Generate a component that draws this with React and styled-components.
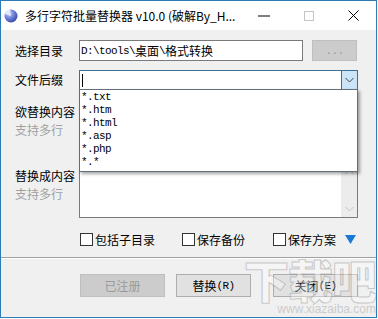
import React from "react";
import styled, { createGlobalStyle } from "styled-components";

const UI = `"Noto Sans CJK SC", "Noto Sans", sans-serif`;
const MONO = `"Liberation Mono", "DejaVu Sans Mono", monospace`;

const GlobalStyle = createGlobalStyle`
  html, body {
    margin: 0;
    padding: 0;
    background: #fff;
  }
  body {
    font-family: ${UI};
    font-size: 12px;
    color: #000;
  }
`;

const Window = styled.div`
  position: relative;
  width: 377px;
  height: 318px;
  box-sizing: border-box;
  border: 1px solid #2c7bb6;
  background: #f0f0f0;
  display: flex;
  flex-direction: column;
  overflow: hidden;
`;

const TitleBar = styled.div`
  height: 29px;
  flex-shrink: 0;
  background: #fff;
  display: flex;
  align-items: center;
`;

const AppIcon = styled.svg`
  width: 14px;
  height: 14px;
  margin-left: 3px;
  flex-shrink: 0;
`;

const Title = styled.div`
  margin-left: 7px;
  font-size: 12px;
  line-height: 16px;
  white-space: nowrap;
`;

const Controls = styled.div`
  margin-left: auto;
  display: flex;
  height: 29px;
`;

const CtrlBtn = styled.div`
  width: 45px;
  height: 29px;
  display: flex;
  align-items: center;
  justify-content: center;
`;

const Body = styled.div`
  padding: 10px 0 0 14px;
  display: flex;
  flex-direction: column;
`;

const Row = styled.div`
  display: flex;
  align-items: ${(p) => (p.$top ? "flex-start" : "center")};
  margin-top: ${(p) => p.$gap || 0}px;
`;

const Label = styled.div`
  width: 64px;
  flex-shrink: 0;
  font-size: 12px;
  line-height: 18px;
`;

const LabelStack = styled.div`
  width: 64px;
  flex-shrink: 0;
  padding-top: 4px;
  line-height: 18px;
  font-size: 12px;
`;

const Hint = styled.div`
  color: #a0a0a0;
`;

const TextBox = styled.div`
  width: 224px;
  height: 21px;
  box-sizing: border-box;
  border: 1px solid #7a7a7a;
  background: #fff;
  padding-left: 1px;
  display: flex;
  align-items: center;
  white-space: nowrap;
  font-size: 12px;
`;

const Ascii = styled.span`
  font-family: ${MONO};
  font-size: 11px;
  letter-spacing: -0.6px;
`;

const Button = styled.div`
  width: ${(p) => p.$w}px;
  height: ${(p) => p.$h || 23}px;
  margin-left: ${(p) => p.$ml || 0}px;
  box-sizing: border-box;
  border: 1px solid ${(p) => (p.$disabled ? "#bfbfbf" : "#adadad")};
  background: ${(p) => (p.$disabled ? "#cccccc" : "#e1e1e1")};
  color: ${(p) => (p.$disabled ? "#9a9a9a" : "#000")};
  display: flex;
  align-items: center;
  justify-content: center;
  font-size: 12px;
  flex-shrink: 0;
`;

const Combo = styled.div`
  position: relative;
  width: 279px;
  height: 20px;
  box-sizing: border-box;
  border: 1px solid #3d6e94;
  background: #fff;
  display: flex;
`;

const CaretArea = styled.div`
  flex: 1;
  display: flex;
  align-items: center;
  padding-left: 2px;
`;

const Caret = styled.div`
  width: 1px;
  height: 13px;
  background: #000;
`;

const ComboArrow = styled.div`
  width: 15px;
  border-left: 1px solid #3d6e94;
  background: #cce4f7;
  display: flex;
  align-items: center;
  justify-content: center;
`;

const DropList = styled.div`
  position: absolute;
  top: 18px;
  left: -1px;
  width: 279px;
  box-sizing: border-box;
  border: 1px solid #646e78;
  background: #fff;
  padding: 1px 0 2px;
  box-shadow: 2px 2px 3px rgba(0, 0, 0, 0.35);
  z-index: 2;
`;

const DropItem = styled.div`
  height: 13px;
  line-height: 13px;
  padding-left: 1px;
  font-family: ${MONO};
  font-size: 11px;
  letter-spacing: -0.6px;
`;

const Memo = styled.div`
  width: 279px;
  height: ${(p) => p.$h}px;
  box-sizing: border-box;
  border: 1px solid #7a7a7a;
  background: #fff;
  display: flex;
  justify-content: flex-end;
`;

const ScrollBar = styled.div`
  width: 16px;
  background: #ececec;
  display: flex;
  flex-direction: column;
  justify-content: space-between;
  align-items: center;
  padding: 5px 0;
`;

const Options = styled.div`
  margin: 13px 0 0 65px;
  height: 17px;
  display: grid;
  grid-template-columns: 102px 91px 72px 12px;
  align-items: center;
`;

const Check = styled.div`
  display: flex;
  align-items: center;
  font-size: 12px;
  line-height: 17px;
`;

const Box = styled.div`
  width: 13px;
  height: 13px;
  box-sizing: border-box;
  border: 1px solid #333;
  background: #fff;
  margin-right: 2px;
`;

const Separator = styled.div`
  margin-top: 9px;
  border-top: 1px solid #a0a0a0;
  border-bottom: 1px solid #fff;
`;

const Footer = styled.div`
  padding: 15px 0 0 79px;
  display: flex;
`;

const Watermark = styled.div`
  position: absolute;
  right: 0;
  bottom: 0;
  width: 138px;
  pointer-events: none;
  display: flex;
  flex-direction: column;
  align-items: flex-end;
`;

const MarkBig = styled.div`
  font-family: ${UI};
  font-size: 45px;
  font-weight: 900;
  line-height: 47px;
  letter-spacing: -1px;
  color: rgba(255, 255, 255, 0.35);
  -webkit-text-stroke: 1px rgba(130, 130, 130, 0.4);
`;

const MarkUrl = styled.div`
  font-family: "Liberation Sans", sans-serif;
  font-size: 12px;
  line-height: 12px;
  margin-bottom: 2px;
  color: rgba(170, 170, 170, 0.55);
`;

const Chevron = ({ up, color = "#333" }) => (
  <svg width="9" height="6" viewBox="0 0 9 6">
    <path
      d={up ? "M0.5 5 L4.5 1 L8.5 5" : "M0.5 1 L4.5 5 L8.5 1"}
      fill="none"
      stroke={color}
      strokeWidth="1"
    />
  </svg>
);

const exts = ["*.txt", "*.htm", "*.html", "*.asp", "*.php", "*.*"];

export default function App() {
  return (
    <>
      <GlobalStyle />
      <Window>
        <TitleBar>
          <AppIcon viewBox="0 0 14 14">
            <defs>
              <radialGradient id="g" cx="0.35" cy="0.3" r="0.8">
                <stop offset="0" stopColor="#c8d0f4" />
                <stop offset="0.5" stopColor="#6a7fd8" />
                <stop offset="1" stopColor="#2f3f9e" />
              </radialGradient>
            </defs>
            <circle cx="7" cy="7" r="6.5" fill="url(#g)" />
            <path d="M7 7 L1 5 A6.5 6.5 0 0 1 6 0.6 Z" fill="#e4e8fb" />
          </AppIcon>
          <Title>多行字符批量替换器 v10.0 (破解By_H...</Title>
          <Controls>
            <CtrlBtn>
              <svg width="12" height="2" viewBox="0 0 12 2">
                <rect x="0" y="0.5" width="12" height="1" fill="#000" />
              </svg>
            </CtrlBtn>
            <CtrlBtn>
              <svg width="10" height="10" viewBox="0 0 10 10">
                <rect x="0.5" y="0.5" width="9" height="9" fill="none" stroke="#c4c4c4" />
              </svg>
            </CtrlBtn>
            <CtrlBtn>
              <svg width="11" height="11" viewBox="0 0 11 11">
                <path d="M0.5 0.5 L10.5 10.5 M10.5 0.5 L0.5 10.5" stroke="#000" strokeWidth="1" />
              </svg>
            </CtrlBtn>
          </Controls>
        </TitleBar>

        <Body>
          <Row>
            <Label>选择目录</Label>
            <TextBox>
              <Ascii>D:\tools\</Ascii>桌面<Ascii>\</Ascii>格式转换
            </TextBox>
            <Button $w={45} $h={21} $ml={9} $disabled>
              <Ascii>...</Ascii>
            </Button>
          </Row>

          <Row $gap={9}>
            <Label>文件后缀</Label>
            <Combo>
              <CaretArea>
                <Caret />
              </CaretArea>
              <ComboArrow>
                <Chevron color="#444" />
              </ComboArrow>
              <DropList>
                {exts.map((e) => (
                  <DropItem key={e}>{e}</DropItem>
                ))}
              </DropList>
            </Combo>
          </Row>

          <Row $gap={9} $top>
            <LabelStack>
              <div>欲替换内容</div>
              <Hint>支持多行</Hint>
            </LabelStack>
            <Memo $h={56}>
              <ScrollBar>
                <Chevron up color="#c2c2c2" />
                <Chevron color="#c2c2c2" />
              </ScrollBar>
            </Memo>
          </Row>

          <Row $gap={8} $top>
            <LabelStack>
              <div>替换成内容</div>
              <Hint>支持多行</Hint>
            </LabelStack>
            <Memo $h={55}>
              <ScrollBar>
                <Chevron up color="#c2c2c2" />
                <Chevron color="#c2c2c2" />
              </ScrollBar>
            </Memo>
          </Row>

          <Options>
            <Check>
              <Box />
              包括子目录
            </Check>
            <Check>
              <Box />
              保存备份
            </Check>
            <Check>
              <Box />
              保存方案
            </Check>
            <svg width="11" height="9" viewBox="0 0 11 9">
              <path d="M0 0 L11 0 L5.5 9 Z" fill="#1a78d6" />
            </svg>
          </Options>
        </Body>

        <Separator />

        <Footer>
          <Button $w={85} $disabled>
            已注册
          </Button>
          <Button $w={75} $ml={11}>
            替换<Ascii>(R)</Ascii>
          </Button>
          <Button $w={85} $ml={22}>
            关闭<Ascii>(E)</Ascii>
          </Button>
        </Footer>

        <Watermark>
          <MarkBig>下载吧</MarkBig>
          <MarkUrl>www.xiazaiba.com</MarkUrl>
        </Watermark>
      </Window>
    </>
  );
}
